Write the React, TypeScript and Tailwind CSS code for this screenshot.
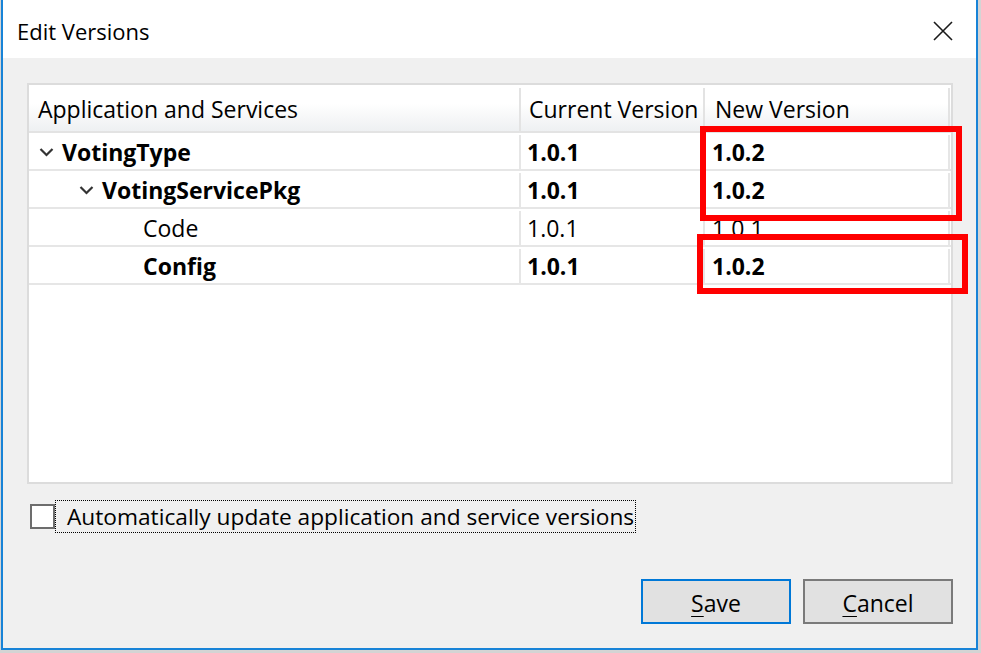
import React from "react";

const font = { fontFamily: '"Open Sans", "Noto Sans", sans-serif' };

function Chevron() {
  return (
    <svg width="15" height="10" viewBox="0 0 15 10" className="shrink-0">
      <path d="M1.5 2 L7.5 8 L13.5 2" fill="none" stroke="#333333" strokeWidth="2.2" />
    </svg>
  );
}

type Row = {
  name: string;
  indent: number;
  expander?: boolean;
  bold: boolean;
  current: string;
  next: string;
};

const rows: Row[] = [
  { name: "VotingType", indent: 10, expander: true, bold: true, current: "1.0.1", next: "1.0.2" },
  { name: "VotingServicePkg", indent: 50, expander: true, bold: true, current: "1.0.1", next: "1.0.2" },
  { name: "Code", indent: 114, bold: false, current: "1.0.1", next: "1.0.1" },
  { name: "Config", indent: 114, bold: true, current: "1.0.1", next: "1.0.2" },
];

export default function App() {
  return (
    <div className="w-[981px] h-[653px] bg-[#d4d4d4] overflow-hidden" style={font}>
      <div className="relative ml-[1px] w-[977px] h-[650px] border-x-2 border-b-2 border-[#1883d7] flex flex-col text-black">
        {/* title bar */}
        <div className="h-[58px] bg-white flex items-center justify-between pl-[14px] pr-[23px] pt-[3px]">
          <span className="text-[22px] leading-none">Edit Versions</span>
          <svg width="20" height="20" viewBox="0 0 20 20">
            <path d="M1 1 L19 19 M19 1 L1 19" stroke="#1a1a1a" strokeWidth="1.6" />
          </svg>
        </div>

        <div className="flex-1 bg-[#f0f0f0] flex flex-col pl-[24px] pr-[23px] pt-[25px]">
          {/* table */}
          <div className="h-[401px] border-2 border-[#dcdcdc] bg-white flex flex-col">
            <div className="h-[48px] flex border-b-2 border-[#e3e3e3] bg-gradient-to-b from-white from-40% to-[#eef0f2] text-[23px] pt-[3px]">
              <div className="w-[492px] border-r-2 border-[#e3e3e3] flex items-center pl-[9px]">
                Application and Services
              </div>
              <div className="w-[184px] border-r-2 border-[#e3e3e3] flex items-center pl-[8px]">
                Current Version
              </div>
              <div className="flex-1 border-r-2 border-[#e3e3e3] flex items-center pl-[10px] mr-[1px]">
                New Version
              </div>
            </div>
            {rows.map((r) => (
              <div key={r.name} className="h-[38px] flex border-b-2 border-[#e6e6e6] text-[23px] pt-[2px]">
                <div className="w-[492px] border-r-2 border-[#e6e6e6] flex items-center">
                  <div className="flex items-center gap-[8px]" style={{ paddingLeft: r.indent }}>
                    {r.expander && <Chevron />}
                    <span className={r.bold ? "font-bold" : ""}>{r.name}</span>
                  </div>
                </div>
                <div className={`w-[184px] border-r-2 border-[#e6e6e6] flex items-center pl-[6px] ${r.bold ? "font-bold" : ""}`}>
                  {r.current}
                </div>
                <div className={`flex-1 border-r-2 border-[#e6e6e6] flex items-center pl-[7px] mr-[1px] ${r.bold ? "font-bold" : ""}`}>
                  {r.next}
                </div>
              </div>
            ))}
          </div>

          {/* checkbox */}
          <div className="mt-[16px] flex items-center">
            <div className="ml-[3px] w-[25px] h-[25px] border-2 border-[#6d6d6d] bg-white" />
            <div className="h-[33px] border border-dotted border-black flex items-center pl-[11px] pr-[1px] text-[22.7px] pt-[1px]">
              Automatically update application and service versions
            </div>
          </div>

          {/* buttons */}
          <div className="mt-auto mb-[24px] flex justify-end gap-[12px]">
            <button className="w-[150px] h-[45px] border-2 border-[#0078d7] bg-[#e1e1e1] text-[23px] pt-[3px]">
              <span className="underline underline-offset-4 decoration-1">S</span>ave
            </button>
            <button className="w-[150px] h-[45px] border-2 border-[#7a7a7a] bg-[#e1e1e1] text-[23px] pt-[3px]">
              <span className="underline underline-offset-4 decoration-1">C</span>ancel
            </button>
          </div>
        </div>

        {/* annotation boxes */}
        <div className="absolute left-[697px] top-[126px] w-[262px] h-[95px] border-[6px] border-[#ff0000]" />
        <div className="absolute left-[694px] top-[234px] w-[271px] h-[60px] border-[6px] border-[#ff0000]" />
      </div>
    </div>
  );
}
